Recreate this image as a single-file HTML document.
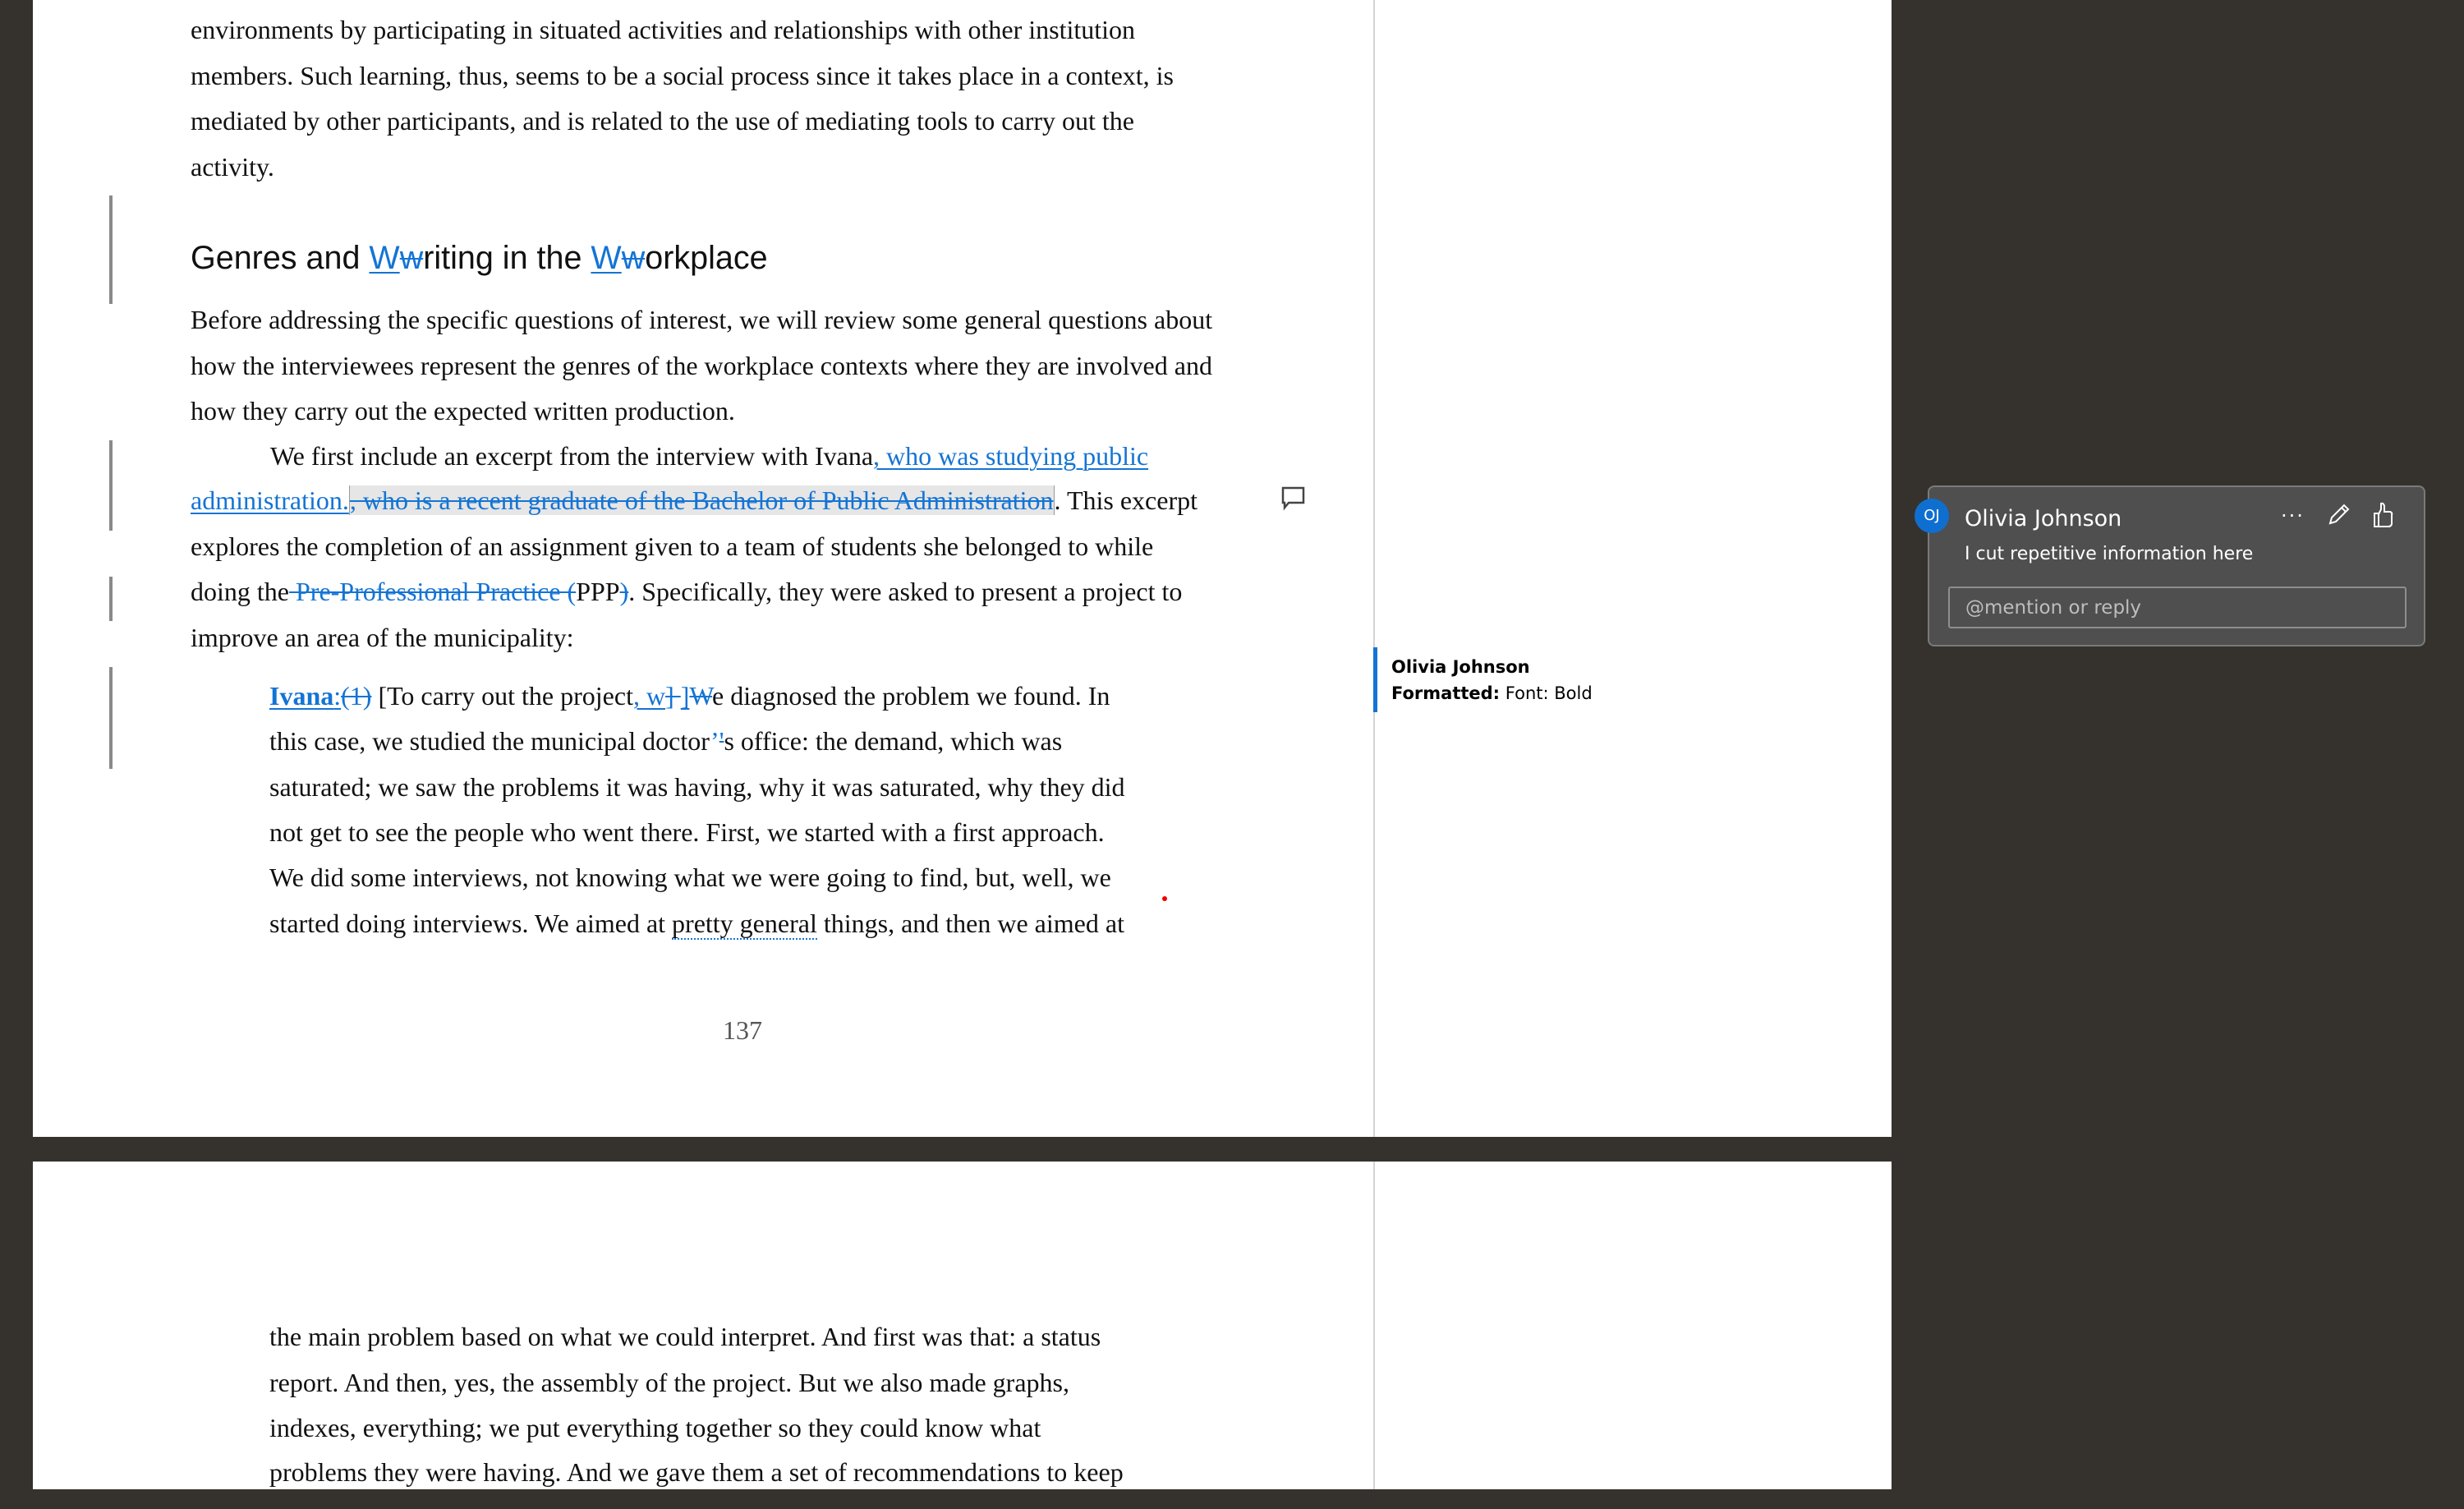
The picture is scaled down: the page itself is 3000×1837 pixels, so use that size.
<!DOCTYPE html>
<html><head><meta charset="utf-8"><style>
html,body{margin:0;padding:0}
body{width:3000px;height:1837px;background:#35322d;position:relative;overflow:hidden;font-family:"Liberation Serif",serif}
.page{position:absolute;background:#fff}
.l{position:absolute;white-space:nowrap;font-size:32px;line-height:40px;color:#111}
.b{color:#1474d4}
.u{text-decoration:underline;text-decoration-thickness:2px;text-underline-offset:4px}
.s{text-decoration:line-through;text-decoration-thickness:2px}
.bar{position:absolute;left:133px;width:4px;background:#8a8a8a}
.sans{font-family:"DejaVu Sans","Liberation Sans",sans-serif}
</style></head><body>
<div class="page" style="left:40px;top:0;width:2263px;height:1384px"></div>
<div class="page" style="left:40px;top:1414px;width:2263px;height:399px"></div>
<div style="position:absolute;left:1672px;top:0;width:2px;height:1384px;background:#d4d4d4"></div>
<div style="position:absolute;left:1672px;top:1414px;width:2px;height:399px;background:#d4d4d4"></div>

<div class="bar" style="top:238px;height:132px"></div>
<div class="bar" style="top:536px;height:110px"></div>
<div class="bar" style="top:702px;height:54px"></div>
<div class="bar" style="top:812px;height:124px"></div>

<div class="l" style="left:232px;top:16px">environments by participating in situated activities and relationships with other institution</div>
<div class="l" style="left:232px;top:72px">members. Such learning, thus, seems to be a social process since it takes place in a context, is</div>
<div class="l" style="left:232px;top:127px">mediated by other participants, and is related to the use of mediating tools to carry out the</div>
<div class="l" style="left:232px;top:183px">activity.</div>

<div class="l" style="left:232px;top:292px;font-family:'Liberation Sans',sans-serif;font-size:39.5px;line-height:44px">Genres and <span class="b u">W</span><span class="b s">w</span>riting in the <span class="b u">W</span><span class="b s">w</span>orkplace</div>

<div class="l" style="left:232px;top:369px">Before addressing the specific questions of interest, we will review some general questions about</div>
<div class="l" style="left:232px;top:425px">how the interviewees represent the genres of the workplace contexts where they are involved and</div>
<div class="l" style="left:232px;top:480px">how they carry out the expected written production.</div>
<div class="l" style="left:329px;top:535px">We first include an excerpt from the interview with Ivana<span class="b u">, who was studying public</span></div>
<div class="l" style="left:232px;top:589px"><span class="b u">administration.</span><span class="b s" style="background:#e6e6e6;border-left:1px solid #999;border-right:1px solid #999">, who is a recent graduate of the Bachelor of Public Administration</span>. This excerpt</div>
<div class="l" style="left:232px;top:645px">explores the completion of an assignment given to a team of students she belonged to while</div>
<div class="l" style="left:232px;top:700px">doing the<span class="b s"> Pre-Professional Practice (</span>PPP<span class="b s">)</span>. Specifically, they were asked to present a project to</div>
<div class="l" style="left:232px;top:756px">improve an area of the municipality:</div>

<div class="l" style="left:328px;top:827px"><b class="b u">Ivana</b><span class="b u">:</span><span class="b s">(1)</span> [To carry out the project<span class="b u">, w</span><span class="b s">] </span><span class="b u">]</span><span class="b s">W</span>e diagnosed the problem we found. In</div>
<div class="l" style="left:328px;top:882px">this case, we studied the municipal doctor<span class="b">’</span><span class="b s">'</span>s office: the demand, which was</div>
<div class="l" style="left:328px;top:938px">saturated; we saw the problems it was having, why it was saturated, why they did</div>
<div class="l" style="left:328px;top:993px">not get to see the people who went there. First, we started with a first approach.</div>
<div class="l" style="left:328px;top:1048px">We did some interviews, not knowing what we were going to find, but, well, we</div>
<div class="l" style="left:328px;top:1104px">started doing interviews. We aimed at <span style="border-bottom:2px dotted #1474d4">pretty general</span> things, and then we aimed at</div>
<div style="position:absolute;left:1415px;top:1091px;width:6px;height:6px;border-radius:50%;background:#e00"></div>

<div class="l" style="left:880px;top:1234px;color:#555">137</div>

<div class="l" style="left:328px;top:1607px">the main problem based on what we could interpret. And first was that: a status</div>
<div class="l" style="left:328px;top:1663px">report. And then, yes, the assembly of the project. But we also made graphs,</div>
<div class="l" style="left:328px;top:1718px">indexes, everything; we put everything together so they could know what</div>
<div class="l" style="left:328px;top:1772px">problems they were having. And we gave them a set of recommendations to keep</div>

<svg style="position:absolute;left:1560px;top:592px" width="30" height="30" viewBox="0 0 30 30"><path d="M2 2H27V20H9L4 26V20H2Z" fill="#fff" stroke="#444" stroke-width="2.5"/></svg>

<div style="position:absolute;left:1672px;top:788px;width:5px;height:79px;background:#1474d4"></div>
<div class="l sans" style="left:1694px;top:797px;font-size:21px;line-height:30px;color:#000"><b>Olivia Johnson</b></div>
<div class="l sans" style="left:1694px;top:829px;font-size:21px;line-height:30px;color:#000"><b>Formatted:</b> Font: Bold</div>

<div style="position:absolute;left:2347px;top:591px;width:606px;height:196px;background:#4f4f4f;border:2px solid #7a7a7a;border-radius:8px;box-sizing:border-box"></div>
<div class="sans" style="position:absolute;left:2331px;top:607px;width:42px;height:42px;border-radius:50%;background:#0f6fd0;color:#fff;font-size:18px;line-height:42px;text-align:center">OJ</div>
<div class="l sans" style="left:2392px;top:612px;font-size:27px;line-height:40px;color:#fff">Olivia Johnson</div>
<div class="l sans" style="left:2392px;top:658px;font-size:22px;line-height:34px;color:#fff">I cut repetitive information here</div>
<div class="l sans" style="left:2777px;top:608px;font-size:24px;color:#fff;letter-spacing:2px">···</div>
<svg style="position:absolute;left:2833px;top:611px" width="30" height="30" viewBox="0 0 30 30"><path d="M4 26L6 19L21 4L26 9L11 24Z M18 7L23 12" fill="none" stroke="#fff" stroke-width="2"/></svg>
<svg style="position:absolute;left:2888px;top:611px" width="26" height="32" viewBox="0 0 26 32"><path d="M3 14H8V30H3Z M8 15L11 9V2Q14 1 15 5V12H22Q25 13 24 16V27Q23 30 20 30H8" fill="none" stroke="#fff" stroke-width="2"/></svg>
<div style="position:absolute;left:2372px;top:714px;width:558px;height:51px;border:2px solid #8e8e8e;border-radius:3px;box-sizing:border-box"></div>
<div class="l sans" style="left:2393px;top:723px;font-size:23px;line-height:34px;color:#bdbdbd">@mention or reply</div>
</body></html>
